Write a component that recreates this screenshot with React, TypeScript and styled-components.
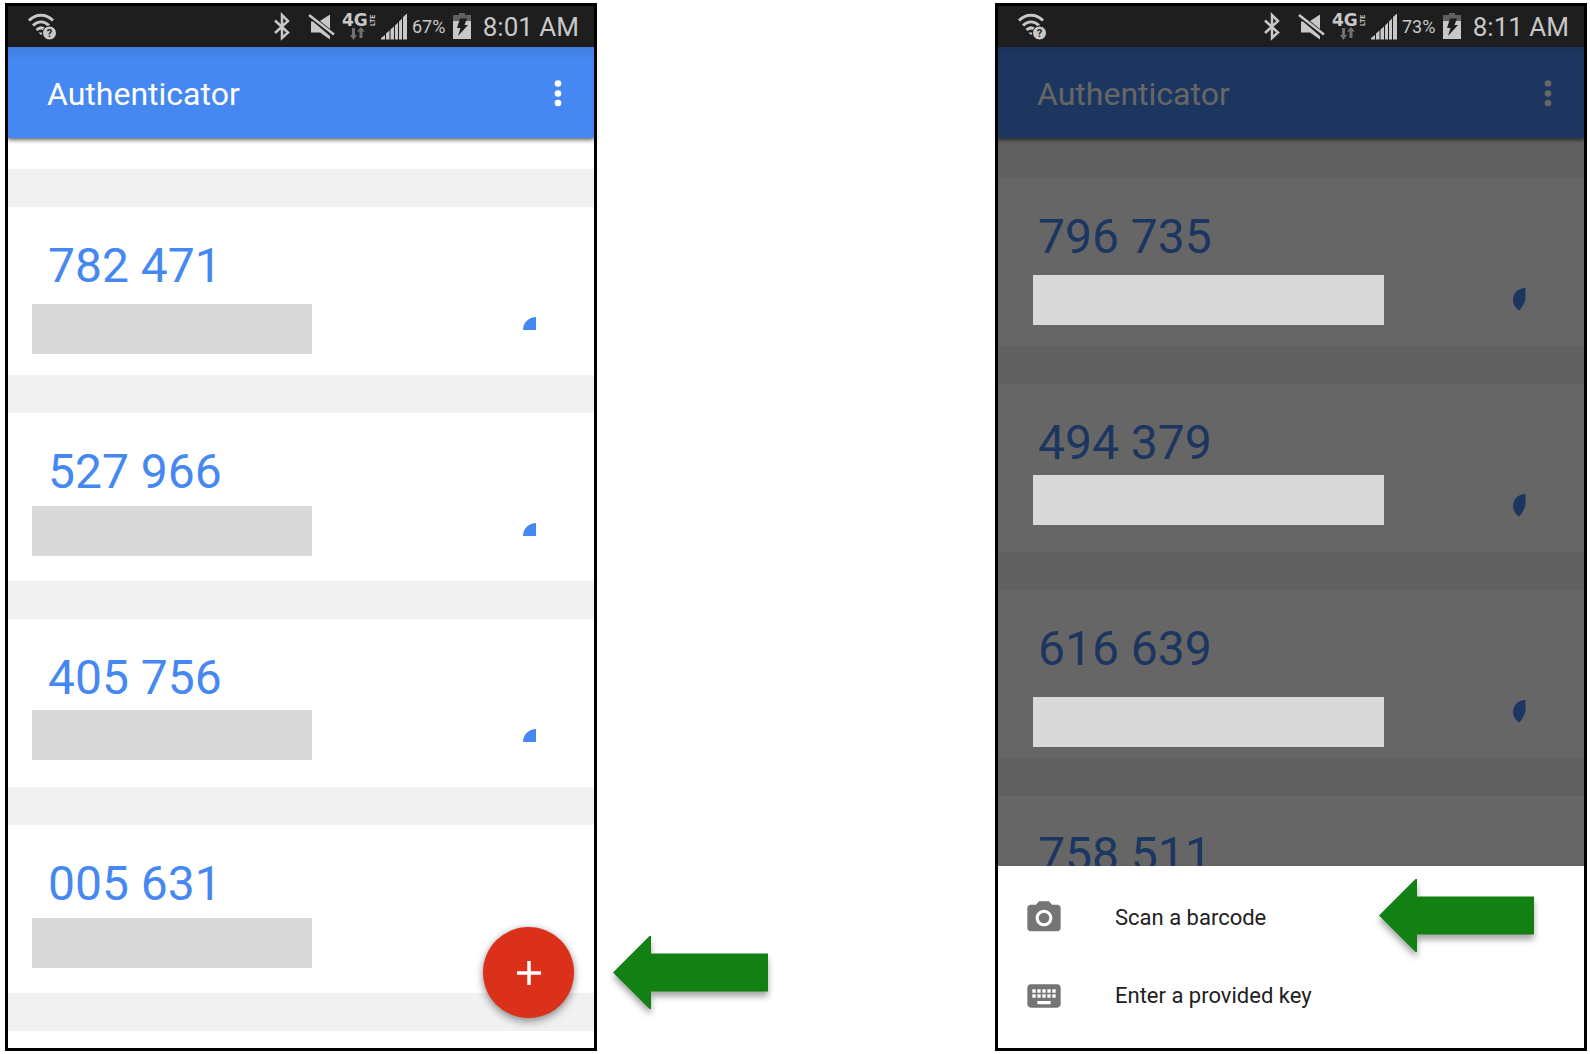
import React from "react";
import styled, { createGlobalStyle, css } from "styled-components";

const BLUE = "#4688f1";
const STATUS = "#c8c8c8";

const GlobalStyle = createGlobalStyle`
  * { box-sizing: border-box; }
  body {
    margin: 0;
    background: #fff;
    font-family: Roboto, "Noto Sans", sans-serif;
  }
  button { font: inherit; border: 0; background: none; padding: 0; cursor: pointer; }
  h1, p, ul { margin: 0; padding: 0; }
  ul { list-style: none; }
  svg { display: block; flex: none; overflow: visible; }
`;

const Page = styled.main`
  display: grid;
  grid-template-columns: minmax(0, 592fr) minmax(0, 398fr) minmax(0, 592fr);
  padding: 3px 3px 3px 5px;
`;

const Phone = styled.section`
  position: relative;
  display: flex;
  flex-direction: column;
  border: 3px solid #000;
  background: #fff;
`;

const StatusBar = styled.div`
  display: flex;
  align-items: center;
  gap: 6px;
  height: 41px;
  padding: 0 15px 0 20px;
  background: #1e1e1e;
  color: ${STATUS};
`;

const Spacer = styled.span`
  flex: 1;
`;

const Percent = styled.span`
  width: 34px;
  font-size: 18px;
  line-height: 24px;
`;

const Clock = styled.time`
  width: 101px;
  text-align: right;
  font-size: 26px;
  line-height: 32px;
  white-space: nowrap;
`;

const Screen = styled.div<{ $dimmed?: boolean }>`
  position: relative;
  flex: 1;
  ${(p) =>
    p.$dimmed &&
    css`
      &::after {
        content: "";
        position: absolute;
        inset: 0;
        z-index: 2;
        background: rgba(0, 0, 0, 0.6);
      }
    `}
`;

const AppBar = styled.header`
  position: relative;
  z-index: 1;
  display: flex;
  align-items: center;
  justify-content: space-between;
  height: 91px;
  padding: 2px 24px 0 39px;
  color: #fff;
  background: linear-gradient(#4280e2, ${BLUE} 14px);
  box-shadow: 0 2px 4px rgba(0, 0, 0, 0.6);
`;

const Title = styled.h1`
  font-size: 32px;
  font-weight: 400;
  line-height: 40px;
`;

const MenuButton = styled.button`
  color: inherit;
`;

const Accounts = styled.ul<{ $lead: "gap" | "band" }>`
  background: #f1f1f1;
  border-top: ${(p) => (p.$lead === "gap" ? "31px solid #fff" : "0")};
  padding: ${(p) => (p.$lead === "gap" ? "38px 0" : "40px 0 0")};
  display: flex;
  flex-direction: column;
  gap: 38px;
`;

const Card = styled.li<{ $inset: number; $cut?: boolean }>`
  display: flex;
  justify-content: space-between;
  height: ${(p) => (p.$cut ? 70 : 168)}px;
  padding: 31px 45px 0 ${(p) => p.$inset}px;
  background: #fff;
  overflow: hidden;
`;

const Details = styled.div<{ $basis: number }>`
  flex: 0 1 ${(p) => p.$basis}px;
`;

const Code = styled.p<{ $indent: number }>`
  padding-left: ${(p) => p.$indent}px;
  color: ${BLUE};
  font-size: 48px;
  line-height: 56px;
  white-space: nowrap;
`;

const Mask = styled.div<{ $gap: number }>`
  position: relative;
  z-index: 3;
  height: 50px;
  margin-top: ${(p) => p.$gap}px;
  background: #d9d9d9;
`;

const TimerSlot = styled.span`
  align-self: flex-end;
  padding-bottom: 32px;
`;

const Footing = styled.div`
  height: 16px;
`;

const AddButton = styled.button`
  position: absolute;
  right: 20px;
  bottom: 30px;
  z-index: 2;
  display: grid;
  place-items: center;
  width: 91px;
  height: 91px;
  border-radius: 50%;
  background: #db3019;
  box-shadow: 0 4px 8px rgba(0, 0, 0, 0.35), 0 0 6px rgba(0, 0, 0, 0.15);
`;

const Callout = styled.div`
  align-self: end;
  padding: 0 0 42px 16px;
`;

const ArrowSvg = styled.svg`
  filter: drop-shadow(0 5px 3px rgba(0, 0, 0, 0.35));
`;

const Sheet = styled.ul`
  padding: 13px 0;
  background: #fff;
`;

const SheetRow = styled.li`
  display: flex;
  justify-content: space-between;
  align-items: flex-start;
  padding: 0 50px 0 26px;
`;

const SheetButton = styled.button`
  display: flex;
  align-items: center;
  gap: 51px;
  height: 78px;
  color: #212121;
  font-size: 22px;
  line-height: 28px;
  white-space: nowrap;
`;

const WifiIcon = () => (
  <svg width="30" height="28" viewBox="0 0 30 28" fill="none" stroke={STATUS} strokeWidth="3" aria-hidden="true">
    <path d="M1 7.500C8 .6 18 .6 25 7.500" />
    <path d="M5 12.500c5-4.700 11-4.700 16 0" />
    <path d="M8.500 17c3-2.800 6-2.800 9 0" />
    <path d="M10.500 19.500h5l-2.500 2.500z" fill={STATUS} stroke="none" />
    <circle cx="21.500" cy="20" r="7" fill={STATUS} stroke="#1e1e1e" strokeWidth="1" />
    <text x="21.500" y="24" textAnchor="middle" fontFamily="Roboto, sans-serif" fontSize="11" fontWeight="700" fill="#1e1e1e" stroke="none">?</text>
  </svg>
);

const BluetoothIcon = () => (
  <svg width="28" height="28" viewBox="0 0 28 28" fill="none" stroke={STATUS} strokeWidth="2.500" aria-hidden="true">
    <path d="M1 7.500l13 12-6 5.500V2l6 6L1 20" />
  </svg>
);

const MuteIcon = () => (
  <svg width="28" height="28" viewBox="0 0 28 28" aria-hidden="true">
    <path d="M12 8L22 1.500V16z" fill={STATUS} />
    <path d="M1 2l25 19.500" stroke={STATUS} strokeWidth="2.500" />
    <path d="M3 8.500h2l17 14.500v3.500L12 19.500H3z" fill={STATUS} />
  </svg>
);

const NetworkIcon = () => (
  <svg width="34" height="28" viewBox="0 0 34 28" aria-hidden="true">
    <text x="0" y="13" fontFamily="DejaVu Sans, sans-serif" fontSize="17" fontWeight="700" fill={STATUS}>4G</text>
    <text transform="translate(33 13) rotate(-90)" fontFamily="Roboto, sans-serif" fontSize="7" fontWeight="700" fill={STATUS}>LTE</text>
    <path d="M10 15h3v7h2l-3.500 5L8 22h2zM17.500 25h3v-6.500H23l-4-4.500-4 4.500h2.500z" fill="#707070" />
  </svg>
);

const SignalIcon = () => (
  <svg width="24" height="28" viewBox="0 0 24 28" fill={STATUS} aria-hidden="true">
    <path d="M-1 25l4-3v4.500h-4zM4 20.500l3.500-3v9H4zM8.500 16.500l3.500-3v13H8.500zM13 12.500l3-3v17h-3zM17 8.500l3-3v21h-3zM21 4l4-3.500v26h-4z" />
  </svg>
);

const BatteryIcon = () => (
  <svg width="20" height="28" viewBox="0 0 20 28" aria-hidden="true">
    <path d="M7 0h6v2h6v6H1V2h6z" fill="#606060" />
    <path d="M1 8h18v18H1z" fill={STATUS} />
    <path d="M8 5.500h7L12.500 12H16L6 23l2.500-8H5z" fill="#1e1e1e" />
  </svg>
);

const DotsIcon = () => (
  <svg width="24" height="32" viewBox="0 0 24 32" fill="currentColor" aria-hidden="true">
    <circle cx="12" cy="5.500" r="3.300" />
    <circle cx="12" cy="15.500" r="3.300" />
    <circle cx="12" cy="25" r="3.300" />
  </svg>
);

const PlusIcon = () => (
  <svg width="24" height="24" viewBox="0 0 24 24" stroke="#fff" strokeWidth="3.500" aria-hidden="true">
    <path d="M12 0v24M0 12h24" />
  </svg>
);

const CameraIcon = () => (
  <svg width="40" height="40" viewBox="0 0 24 24" fill="#757575" aria-hidden="true">
    <circle cx="12" cy="12" r="3.200" />
    <path fillRule="evenodd" d="M9 2L7.170 4H4c-1.100 0-2 .9-2 2v12c0 1.100.9 2 2 2h16c1.100 0 2-.9 2-2V6c0-1.100-.9-2-2-2h-3.170L15 2H9zm3 15c-2.760 0-5-2.240-5-5s2.240-5 5-5 5 2.240 5 5-2.240 5-5 5z" />
  </svg>
);

const KeyboardIcon = () => (
  <svg width="40" height="40" viewBox="0 0 24 24" fill="#757575" aria-hidden="true">
    <path d="M20 5H4c-1.100 0-1.990.9-1.990 2L2 17c0 1.100.9 2 2 2h16c1.100 0 2-.9 2-2V7c0-1.100-.9-2-2-2zm-9 3h2v2h-2V8zm0 3h2v2h-2v-2zM8 8h2v2H8V8zm0 3h2v2H8v-2zm-1 2H5v-2h2v2zm0-3H5V8h2v2zm9 7H8v-2h8v2zm0-4h-2v-2h2v2zm0-3h-2V8h2v2zm3 3h-2v-2h2v2zm0-3h-2V8h2v2z" />
  </svg>
);

const Arrow = () => (
  <ArrowSvg width="155" height="73" viewBox="0 0 155 73" aria-hidden="true">
    <path d="M0 36.500L36.500 0H38v17.500h117v38H38V73h-1.500z" fill="#128012" />
  </ArrowSvg>
);

type TimerShape = "quarter" | "third";

// The wedge is the share of the 30 seconds that the code stays valid.
const Timer = ({ shape }: { shape: TimerShape }) => (
  <svg width="26" height="26" viewBox="0 0 26 26" fill={BLUE} aria-hidden="true">
    <path d={shape === "quarter" ? "M13 13V0A13 13 0 0 0 0 13z" : "M12.500 0C5 0 0 5.500 0 12c0 5 3 9 6.500 10.500C10 18 12.500 13 12.500 10z"} />
  </svg>
);

type Account = { code: string; gap: number };

type PhoneData = {
  percent: string;
  time: string;
  inset: number;
  basis: number;
  timer: TimerShape;
  accounts: Account[];
};

const listPhone: PhoneData = {
  percent: "67%",
  time: "8:01 AM",
  inset: 24,
  basis: 280,
  timer: "quarter",
  accounts: [
    { code: "782 471", gap: 10 },
    { code: "527 966", gap: 6 },
    { code: "405 756", gap: 4 },
    { code: "005 631", gap: 6 },
  ],
};

const sheetPhone: PhoneData = {
  percent: "73%",
  time: "8:11 AM",
  inset: 35,
  basis: 351,
  timer: "third",
  accounts: [
    { code: "796 735", gap: 10 },
    { code: "494 379", gap: 4 },
    { code: "616 639", gap: 20 },
    { code: "758 511", gap: 10 },
  ],
};

const PhoneStatus = ({ percent, time }: { percent: string; time: string }) => (
  <StatusBar>
    <WifiIcon />
    <Spacer />
    <BluetoothIcon />
    <MuteIcon />
    <NetworkIcon />
    <SignalIcon />
    <Percent>{percent}</Percent>
    <BatteryIcon />
    <Clock>{time}</Clock>
  </StatusBar>
);

const Bar = () => (
  <AppBar>
    <Title>Authenticator</Title>
    <MenuButton type="button" aria-label="More options">
      <DotsIcon />
    </MenuButton>
  </AppBar>
);

const AccountList = ({ data, cutLast }: { data: PhoneData; cutLast?: boolean }) => (
  <Accounts $lead={cutLast ? "band" : "gap"}>
    {data.accounts.map((account, i) => {
      const cut = cutLast && i === data.accounts.length - 1;
      return (
        <Card key={account.code} $inset={data.inset} $cut={cut}>
          <Details $basis={data.basis}>
            <Code $indent={40 - data.inset}>{account.code}</Code>
            {!cut && <Mask $gap={account.gap} />}
          </Details>
          {!cut && (
            <TimerSlot>
              <Timer shape={data.timer} />
            </TimerSlot>
          )}
        </Card>
      );
    })}
  </Accounts>
);

export default function App() {
  return (
    <>
      <GlobalStyle />
      <Page>
        <Phone>
          <PhoneStatus percent={listPhone.percent} time={listPhone.time} />
          <Screen>
            <Bar />
            <AccountList data={listPhone} />
            <Footing />
          </Screen>
          <AddButton type="button" aria-label="Add account">
            <PlusIcon />
          </AddButton>
        </Phone>
        <Callout>
          <Arrow />
        </Callout>
        <Phone>
          <PhoneStatus percent={sheetPhone.percent} time={sheetPhone.time} />
          <Screen $dimmed>
            <Bar />
            <AccountList data={sheetPhone} cutLast />
          </Screen>
          <Sheet>
            <SheetRow>
              <SheetButton type="button">
                <CameraIcon />
                Scan a barcode
              </SheetButton>
              <Arrow />
            </SheetRow>
            <SheetRow>
              <SheetButton type="button">
                <KeyboardIcon />
                Enter a provided key
              </SheetButton>
            </SheetRow>
          </Sheet>
        </Phone>
      </Page>
    </>
  );
}
